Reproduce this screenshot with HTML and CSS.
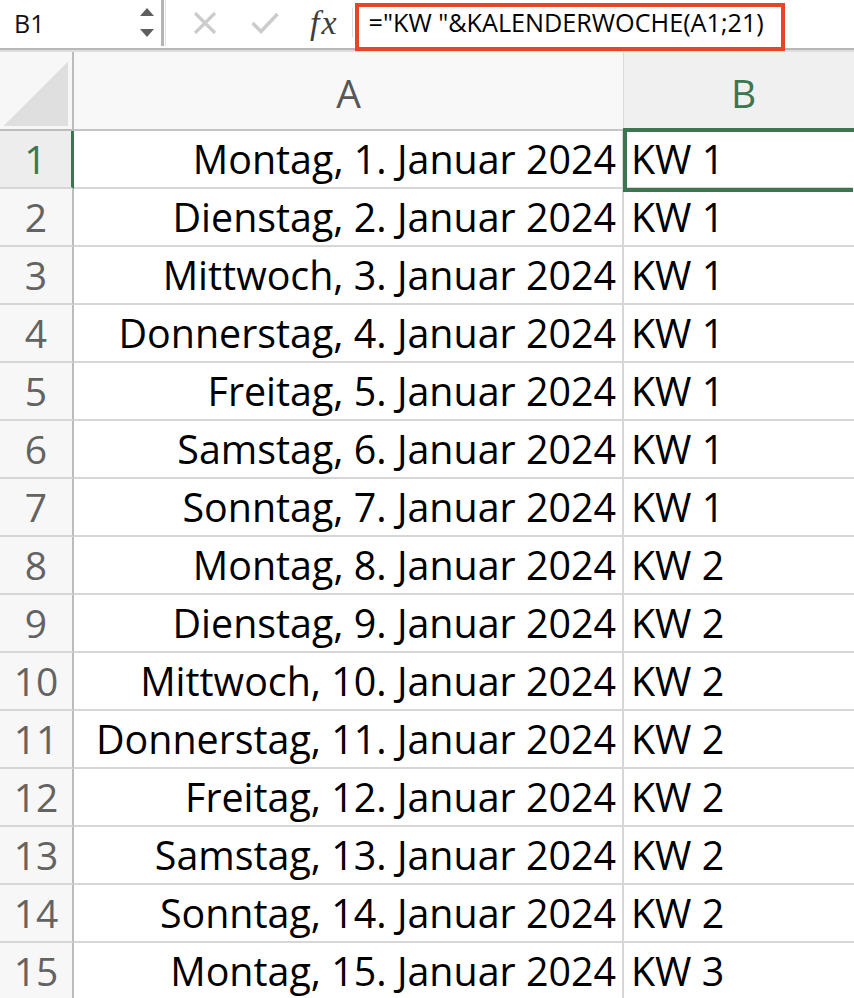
FILE: index.html
```html
<!DOCTYPE html>
<html lang="de">
<head>
<meta charset="utf-8">
<title>KALENDERWOCHE</title>
<link rel="stylesheet" href="styles.css">
</head>
<body>
<div class="toolbar">
  <div class="namebox">
    <span class="name">B1</span>
    <span class="spin">
      <svg width="14" height="30" viewBox="0 0 14 30"><path d="M7 0 L14 8 L0 8 Z" fill="#5e5e5e"/><path d="M0 21 L14 21 L7 29 Z" fill="#5e5e5e"/></svg>
    </span>
  </div>
  <div class="divider"></div>
  <div class="btn cancel">
    <svg width="24" height="22" viewBox="0 0 24 22"><path d="M2 1 L22 21 M22 1 L2 21" stroke="#cbcbcb" stroke-width="3.2" fill="none"/></svg>
  </div>
  <div class="btn confirm">
    <svg width="28" height="22" viewBox="0 0 28 22"><path d="M1.5 11 L10 19.5 L26.5 2" stroke="#cbcbcb" stroke-width="3.4" fill="none"/></svg>
  </div>
  <div class="fx">fx</div>
  <div class="smalldiv"></div>
  <div class="formula">="KW "&amp;KALENDERWOCHE(A1;21)</div>
</div>

<div class="sheet">
  <div class="corner"><div class="tri"></div></div>
  <div class="colhead">A</div>
  <div class="colhead sel">B</div>

  <div class="rowhead sel">1</div><div class="cell a">Montag, 1. Januar 2024</div><div class="cell b">KW 1</div>
  <div class="rowhead">2</div><div class="cell a">Dienstag, 2. Januar 2024</div><div class="cell b">KW 1</div>
  <div class="rowhead">3</div><div class="cell a">Mittwoch, 3. Januar 2024</div><div class="cell b">KW 1</div>
  <div class="rowhead">4</div><div class="cell a">Donnerstag, 4. Januar 2024</div><div class="cell b">KW 1</div>
  <div class="rowhead">5</div><div class="cell a">Freitag, 5. Januar 2024</div><div class="cell b">KW 1</div>
  <div class="rowhead">6</div><div class="cell a">Samstag, 6. Januar 2024</div><div class="cell b">KW 1</div>
  <div class="rowhead">7</div><div class="cell a">Sonntag, 7. Januar 2024</div><div class="cell b">KW 1</div>
  <div class="rowhead">8</div><div class="cell a">Montag, 8. Januar 2024</div><div class="cell b">KW 2</div>
  <div class="rowhead">9</div><div class="cell a">Dienstag, 9. Januar 2024</div><div class="cell b">KW 2</div>
  <div class="rowhead">10</div><div class="cell a">Mittwoch, 10. Januar 2024</div><div class="cell b">KW 2</div>
  <div class="rowhead">11</div><div class="cell a">Donnerstag, 11. Januar 2024</div><div class="cell b">KW 2</div>
  <div class="rowhead">12</div><div class="cell a">Freitag, 12. Januar 2024</div><div class="cell b">KW 2</div>
  <div class="rowhead">13</div><div class="cell a">Samstag, 13. Januar 2024</div><div class="cell b">KW 2</div>
  <div class="rowhead">14</div><div class="cell a">Sonntag, 14. Januar 2024</div><div class="cell b">KW 2</div>
  <div class="rowhead">15</div><div class="cell a">Montag, 15. Januar 2024</div><div class="cell b">KW 3</div>

  <div class="selection"><div class="handle"></div></div>
</div>
</body>
</html>
```
FILE: styles.css
```css
* { box-sizing: border-box; }
html, body { margin: 0; padding: 0; background: #fff; }
body {
  width: 854px;
  height: 998px;
  overflow: hidden;
  font-family: "Open Sans", "Liberation Sans", sans-serif;
  color: #000;
}

.toolbar {
  height: 52px;
  display: flex;
  align-items: flex-start;
  background: linear-gradient(to bottom, #fff 0, #fff 48px, #b7b7b7 48px, #b7b7b7 50px, #dedede 50px, #dedede 52px);
  position: relative;
  z-index: 2;
}
.namebox {
  width: 161px;
  height: 46px;
  display: flex;
  align-items: center;
  padding-left: 14px;
}
.name {
  font-size: 25px;
  line-height: 30px;
  color: #111;
  flex: 1;
}
.spin { width: 14px; margin-right: 7px; display: flex; }
.divider {
  width: 5px;
  height: 46px;
  border-left: 3px solid #b5b5b5;
  border-right: 1px solid #e2e2e2;
}
.btn { height: 46px; display: flex; align-items: center; }
.cancel { margin-left: 27px; }
.confirm { margin-left: 34px; }
.fx {
  margin-left: 31px;
  height: 46px;
  line-height: 46px;
  font-family: "Liberation Serif", "DejaVu Serif", serif;
  font-style: italic;
  font-size: 34px;
  letter-spacing: 2px;
  color: #3d3d3d;
}
.smalldiv {
  width: 1px;
  height: 29px;
  margin-top: 8px;
  margin-left: 13px;
  background: #dcdcdc;
}
.formula {
  margin-left: 2px;
  margin-top: 3px;
  width: 430px;
  height: 48px;
  border: 4px solid #e8432c;
  padding-left: 10px;
  font-size: 25.2px;
  line-height: 31px;
  color: #000;
  white-space: nowrap;
  background: #fff;
}

.sheet {
  display: grid;
  grid-template-columns: 74px 550px 240px;
  grid-template-rows: 79px;
  grid-auto-rows: 58px;
  position: relative;
}
.corner {
  background: #f7f7f7;
  border-right: 2px solid #bcbcbc;
  border-bottom: 2px solid #bcbcbc;
  padding: 10px 4px 3px 4px;
}
.tri {
  width: 64px;
  height: 64px;
  background: linear-gradient(to bottom right, transparent 0, transparent 50%, #dfdfdf 50%, #dfdfdf 100%);
}
.colhead {
  background: #f8f8f8;
  border-bottom: 2px solid #c4c4c4;
  border-right: 1px solid #dadada;
  display: flex;
  align-items: center;
  justify-content: center;
  font-size: 39px;
  line-height: 46px;
  color: #575757;
  padding-top: 5px;
}
.colhead.sel { background: #f0f0f0; color: #3b7650; }

.rowhead {
  background: #f7f7f7;
  border-right: 2px solid #bcbcbc;
  border-bottom: 2px solid #d6d6d6;
  display: flex;
  align-items: center;
  justify-content: center;
  font-size: 39px;
  line-height: 44px;
  color: #636363;
}
.rowhead.sel {
  background: #ededed;
  color: #3b7650;
  border-right: 3px solid #3b7650;
}
.cell {
  border-bottom: 2px solid #d6d6d6;
  display: flex;
  align-items: center;
  font-size: 39.4px;
  line-height: 44px;
  white-space: nowrap;
}
.cell.a {
  justify-content: flex-end;
  padding-right: 6px;
  border-right: 2px solid #d6d6d6;
}
.cell.b { padding-left: 7px; }

.selection {
  position: absolute;
  left: 623px;
  top: 76px;
  width: 232px;
  height: 64px;
  border: 4px solid #3b7650;
  border-right: none;
}
.handle {
  position: absolute;
  right: -4px;
  bottom: -6px;
  width: 6px;
  height: 10px;
  background: #3b7650;
  border-left: 2px solid #fff;
  border-top: 2px solid #fff;
}
```
